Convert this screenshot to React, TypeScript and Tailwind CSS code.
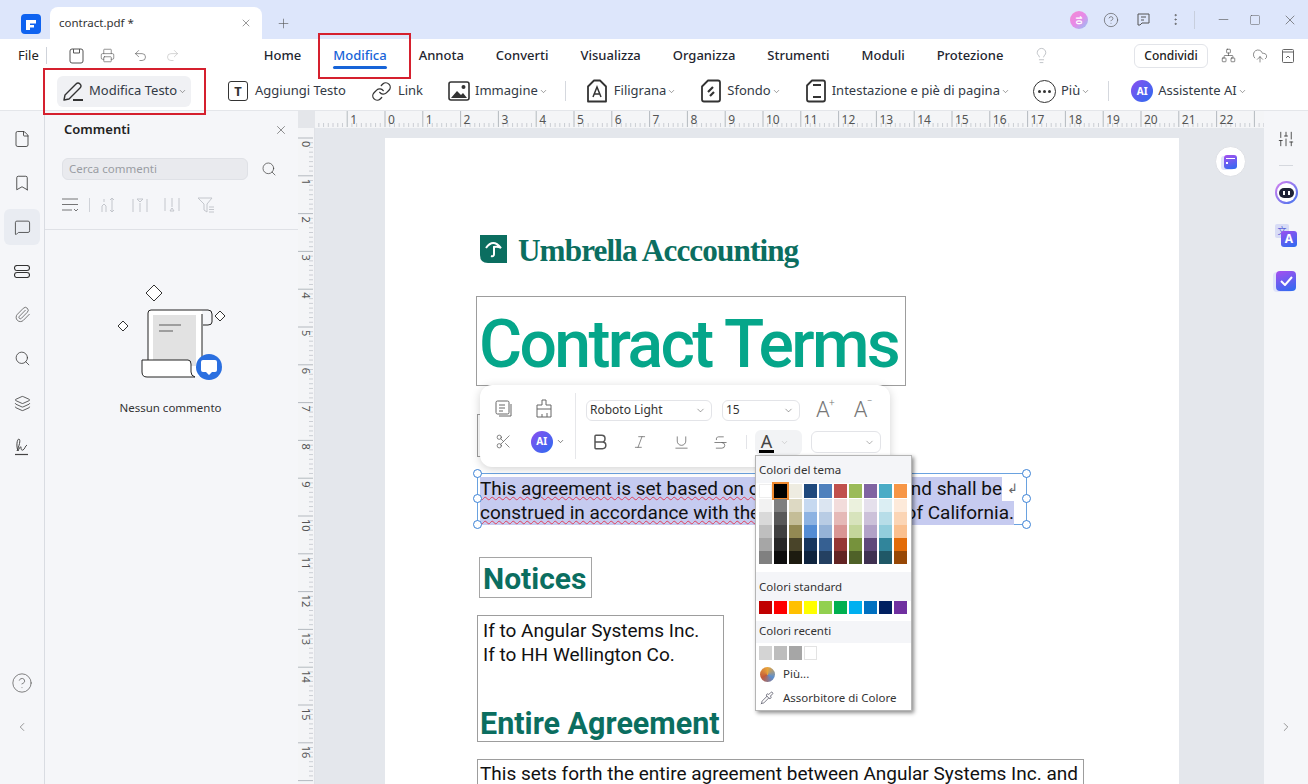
import React from "react";
import {
  X, Plus, Minus, Square, HelpCircle, MoreVertical, ChevronDown, ChevronLeft, ChevronRight, Search,
  Printer, Undo2, Redo2, Lightbulb, Network, CloudUpload, Bookmark, File as FileIcon, MessageSquare,
  Paperclip, Layers, SlidersVertical, Scissors, Bold, Italic, Underline, Strikethrough, Link as LinkIcon, Pipette,
} from "lucide-react";

const theme = [
  ["#ffffff", "#f2f2f2", "#d9d9d9", "#bfbfbf", "#a6a6a6", "#808080"],
  ["#000000", "#7f7f7f", "#595959", "#404040", "#262626", "#0d0d0d"],
  ["#eeece1", "#ddd9c3", "#c4bd97", "#938953", "#494429", "#1d1b10"],
  ["#1f497d", "#c6d9f0", "#8db3e2", "#548dd4", "#17365d", "#0f243e"],
  ["#4f81bd", "#dbe5f1", "#b8cce4", "#95b3d7", "#366092", "#244061"],
  ["#c0504d", "#f2dcdb", "#e5b9b7", "#d99694", "#953734", "#632423"],
  ["#9bbb59", "#ebf1dd", "#d7e3bc", "#c3d69b", "#76923c", "#4f6128"],
  ["#8064a2", "#e5e0ec", "#ccc1d9", "#b2a2c7", "#5f497a", "#3f3151"],
  ["#4bacc6", "#dbeef3", "#b7dde8", "#92cddc", "#31859b", "#205867"],
  ["#f79646", "#fdeada", "#fbd5b5", "#fac08f", "#e36c09", "#974806"],
];
const standard = ["#c00000", "#ff0000", "#ffc000", "#ffff00", "#92d050", "#00b050", "#00b0f0", "#0070c0", "#002060", "#7030a0"];

const UNIT = 37.8;

function HRuler() {
  const ticks: React.ReactNode[] = [];
  for (let i = -34; i < 200; i++) {
    const x = 70 + (i * UNIT) / 8;
    const major = i % 8 === 0;
    ticks.push(<line key={i} x1={x} x2={x} y1={major ? 0 : 12} y2={16} stroke={major ? "#9aa0a8" : "#b9bdc4"} strokeWidth="0.7" />);
  }
  const labels: React.ReactNode[] = [];
  for (let n = -1; n <= 22; n++) {
    labels.push(<text key={n} x={70 + n * UNIT + 3} y={13} fontSize="12" fill="#555" fontFamily="Noto Sans, sans-serif">{Math.abs(n)}</text>);
  }
  return (
    <svg width="950" height="16" className="block">
      {ticks}
      {labels}
    </svg>
  );
}

function VRuler() {
  const ticks: React.ReactNode[] = [];
  for (let i = 0; i < 140; i++) {
    const y = 10 + (i * UNIT) / 8;
    const major = i % 8 === 0;
    ticks.push(<line key={i} y1={y} y2={y} x1={major ? 0 : 11} x2={15} stroke={major ? "#9aa0a8" : "#b9bdc4"} strokeWidth="0.7" />);
  }
  const labels: React.ReactNode[] = [];
  for (let n = 0; n <= 16; n++) {
    const y = 10 + n * UNIT + 3;
    labels.push(<text key={n} x={4} y={y} fontSize="11" fill="#555" fontFamily="Noto Sans, sans-serif" transform={`rotate(90 4 ${y})`}>{n}</text>);
  }
  return (
    <svg width="15" height="660" className="block">
      {ticks}
      {labels}
    </svg>
  );
}

function Tool({ icon, label, chevron, className = "", gap = "ml-[6px]" }: { icon: React.ReactNode; label: string; chevron?: boolean; className?: string; gap?: string }) {
  return (
    <div className={`flex items-center shrink-0 ${className}`}>
      {icon}
      <span className={`${gap} text-[13px] text-[#333a45] whitespace-nowrap`}>{label}</span>
      {chevron && <ChevronDown size={9} strokeWidth={1.5} className="ml-[1px] mt-[1px] text-[#555]" />}
    </div>
  );
}

function Tab({ label, active }: { label: string; active?: boolean }) {
  return (
    <div className={`relative h-[29px] flex items-center text-[13px] font-medium whitespace-nowrap ${active ? "text-[#1764d8]" : "text-[#1f2630]"}`}>
      {label}
      {active && <div className="absolute left-0 right-0 bottom-[1px] h-[3px] rounded-full bg-[#1764d8]" />}
    </div>
  );
}

function Handle({ className }: { className: string }) {
  return <div className={`absolute w-[9px] h-[9px] rounded-full bg-white border border-[#3b82d6] ${className}`} />;
}

function NavIcon({ children, active }: { children: React.ReactNode; active?: boolean }) {
  return (
    <div className={`w-[36px] h-[36px] rounded-md flex items-center justify-center ${active ? "bg-[#e9ecf2]" : ""}`}>{children}</div>
  );
}

function Illustration() {
  return (
    <svg width="120" height="110" viewBox="0 0 120 110" fill="none" className="block">
      <path d="M40 3l8 8-8 8-8-8z M106 29l5 5-5 5-5-5z M9 39l5 5-5 5-5-5z" fill="#fff" stroke="#333" strokeWidth="1" />
      <rect x="34" y="28" width="54" height="66" fill="#fff" />
      <rect x="39" y="33" width="43" height="51" fill="#e2e2e2" />
      <path d="M34 78V31q0-3 3-3h57q4 0 4 4v8q0 3-4 3h-5 M88 32V88" stroke="#222" strokeWidth="1" />
      <path d="M45 43h22 M45 49h14" stroke="#888" strokeWidth="1.4" />
      <path d="M28 78h46q3 0 3 4v8q0 4 4 5H33q-5 0-5-5z" fill="#fff" stroke="#222" strokeWidth="1" />
      <circle cx="95" cy="85" r="13" fill="#2a6fe0" />
      <path d="M89 78h12q2 0 2 2v8q0 2-2 2h-3l-3 3-3-3h-3q-2 0-2-2v-8q0-2 2-2z" fill="#fff" />
    </svg>
  );
}

export default function App() {
  return (
    <div className="relative w-[1308px] h-[784px] overflow-hidden bg-white text-[#222] font-['Noto_Sans','Open_Sans',sans-serif]">
      {/* Title bar */}
      <div className="h-[39px] bg-[#dde6fb] flex items-end">
        <div className="w-[50px] h-[39px] flex items-start pl-[21px] pt-[14px]">
          <svg width="20" height="20" viewBox="0 0 20 20">
            <rect width="20" height="20" rx="4" fill="#0f63f0" />
            <path d="M5 6h10v3.500H9V11h4v2.500H9V16H5z" fill="#fff" />
          </svg>
        </div>
        <div className="w-[212px] h-[32px] bg-white rounded-t-lg flex items-center pl-[9px] pr-[10px] justify-between">
          <span className="text-[11.500px] text-[#333]">contract.pdf *</span>
          <X size={12} strokeWidth={1.2} className="text-[#555]" />
        </div>
        <div className="h-[32px] flex items-center ml-[14px]">
          <Plus size={15} strokeWidth={1} className="text-[#555]" />
        </div>
        <div className="flex-1" />
        <div className="h-[39px] flex items-center text-[#555] pr-[10px]">
          <div className="w-[18px] h-[18px] rounded-full bg-[linear-gradient(135deg,#f58ad0,#e78ae8_50%,#8ec6f5)] mr-[15px] flex items-center justify-center text-white text-[8px] font-bold leading-none">
            <span className="rotate-90">10</span>
          </div>
          <HelpCircle size={16} strokeWidth={1} className="mr-[17px]" />
          <svg width="15" height="15" viewBox="0 0 15 15" fill="none" stroke="#555" strokeWidth="1" className="mr-[17px]">
            <path d="M2 2h11v9H6l-2 2H2z M5 5h5 M5 8h3" />
          </svg>
          <MoreVertical size={15} strokeWidth={1.2} className="mr-[11px]" />
          <div className="w-px h-[18px] bg-[#c8cfdd] mr-[21px]" />
          <Minus size={15} strokeWidth={1} className="mr-[18px]" />
          <Square size={12} strokeWidth={1} className="mr-[21px]" />
          <X size={16} strokeWidth={1} />
        </div>
      </div>

      {/* Menu row */}
      <div className="h-[31px] pt-[2px] flex items-center">
        <span className="ml-[18px] text-[13px] text-[#222]">File</span>
        <div className="ml-[7px] w-px h-[17px] bg-[#cfd3da]" />
        <svg width="15" height="16" viewBox="0 0 15 16" fill="none" stroke="#555" strokeWidth="1" className="ml-[22px]">
          <path d="M3 1h9q2 0 2 2v10q0 2-2 2H3q-2 0-2-2V3q0-2 2-2z M4.500 1v4h6V1" />
        </svg>
        <Printer size={15} strokeWidth={1} className="ml-[16px] text-[#555]" />
        <Undo2 size={15} strokeWidth={1} className="ml-[18px] text-[#555]" />
        <Redo2 size={15} strokeWidth={1} className="ml-[17px] text-[#bbb]" />
        <div className="ml-[84px] flex items-center gap-[32px]">
          <Tab label="Home" />
          <Tab label="Modifica" active />
          <Tab label="Annota" />
          <Tab label="Converti" />
          <Tab label="Visualizza" />
          <Tab label="Organizza" />
          <Tab label="Strumenti" />
          <Tab label="Moduli" />
          <Tab label="Protezione" />
        </div>
        <Lightbulb size={17} strokeWidth={1} className="ml-[30px] text-[#a9adb3]" />
        <div className="flex-1" />
        <div className="w-[74px] h-[24px] mr-[13px] rounded-md border border-[#e2e4e9] flex items-center justify-center text-[12px] font-medium text-[#222]">Condividi</div>
        <Network size={15} strokeWidth={1} className="mr-[16px] text-[#444]" />
        <CloudUpload size={16} strokeWidth={1} className="mr-[14px] text-[#555]" />
        <svg width="12" height="14" viewBox="0 0 12 14" fill="none" stroke="#666" strokeWidth="1" className="mr-[14px]">
          <rect x="0.5" y="0.5" width="11" height="13" rx="1" />
          <path d="M0.5 3h11 M4 9l2-2 2 2" />
        </svg>
      </div>

      {/* Tool row */}
      <div className="h-[41px] pt-[2px] flex items-center border-b border-[#e4e6ea]">
        <div className="ml-[57px] w-[134px] h-[31px] rounded-md bg-[#f0f1f4] flex items-center pl-[5px] shrink-0">
          <Tool
            gap="ml-[5px]"
            icon={
              <svg width="22" height="21" viewBox="0 0 22 21" fill="none" stroke="#333" strokeWidth="1.4">
                <path d="M2 19l1-5L14 3q2-2 4 0t0 4L7 18z" strokeLinejoin="round" />
                <path d="M11 19h10" strokeWidth="2" />
              </svg>
            }
            label="Modifica Testo"
            chevron
          />
        </div>
        <Tool
          className="ml-[37px]"
          gap="ml-[7px]"
          icon={<div className="w-[20px] h-[20px] rounded-[3px] border-[1.5px] border-[#333] flex items-center justify-center text-[13px] font-bold leading-none text-[#333]">T</div>}
          label="Aggiungi Testo"
        />
        <Tool className="ml-[25px]" icon={<LinkIcon size={21} strokeWidth={1.5} className="text-[#333]" />} label="Link" />
        <Tool
          className="ml-[25px]"
          gap="ml-[5px]"
          icon={
            <svg width="22" height="20" viewBox="0 0 22 20" fill="none">
              <rect x="1" y="1" width="20" height="18" rx="2" stroke="#333" strokeWidth="1.6" />
              <path d="M3 17l6-7 4 4 2-2 4 5z" fill="#333" />
              <circle cx="15.500" cy="6" r="2" fill="#333" />
            </svg>
          }
          label="Immagine"
          chevron
        />
        <div className="ml-[17px] w-px h-[20px] bg-[#d5d8de]" />
        <Tool
          className="ml-[20px]"
          icon={
            <svg width="22" height="24" viewBox="0 0 22 24" fill="none" stroke="#333" strokeWidth="1.8">
              <path d="M8 1.500h6l6 6v15H2v-15z" strokeLinejoin="round" />
              <path d="M7 18l4-10 4 10 M8.500 15h5" strokeWidth="1.500" />
            </svg>
          }
          label="Filigrana"
          chevron
        />
        <Tool
          className="ml-[24px]"
          gap="ml-[5px]"
          icon={
            <svg width="22" height="24" viewBox="0 0 22 24" fill="none" stroke="#333" strokeWidth="1.8">
              <path d="M8 1.500h10q2 0 2 2v17q0 2-2 2H4q-2 0-2-2v-13z" strokeLinejoin="round" />
              <path d="M8 13l5-5 M10 17l4-4" strokeWidth="2.200" />
            </svg>
          }
          label="Sfondo"
          chevron
        />
        <Tool
          className="ml-[24px]"
          gap="ml-[5px]"
          icon={
            <svg width="22" height="24" viewBox="0 0 22 24" fill="none" stroke="#333" strokeWidth="1.8">
              <path d="M7 1.500h11q2 0 2 2v17q0 2-2 2H4q-2 0-2-2v-14z" strokeLinejoin="round" />
              <path d="M8 6h8 M8 18h8" strokeWidth="2.200" />
            </svg>
          }
          label="Intestazione e piè di pagina"
          chevron
        />
        <Tool
          className="ml-[23px]"
          gap="ml-[5px]"
          icon={
            <div className="w-[23px] h-[23px] rounded-full border-[1.5px] border-[#333] flex items-center justify-center gap-[2px]">
              <div className="w-[3px] h-[3px] rounded-full bg-[#333]" />
              <div className="w-[3px] h-[3px] rounded-full bg-[#333]" />
              <div className="w-[3px] h-[3px] rounded-full bg-[#333]" />
            </div>
          }
          label="Più"
          chevron
        />
        <div className="ml-[18px] w-px h-[20px] bg-[#d5d8de]" />
        <Tool
          className="ml-[22px]"
          gap="ml-[5px]"
          icon={<div className="w-[22px] h-[22px] rounded-full bg-[linear-gradient(135deg,#8a4ff0,#2b6cf0)] text-white text-[10px] font-bold flex items-center justify-center">AI</div>}
          label="Assistente AI"
          chevron
        />
      </div>

      {/* Body */}
      <div className="flex h-[673px]">
        {/* Left nav */}
        <div className="w-[45px] shrink-0 bg-[#f5f6f9] border-r border-[#d9dce2] flex flex-col items-center pt-[10px] text-[#333]">
          <NavIcon><FileIcon size={18} strokeWidth={1.1} /></NavIcon>
          <div className="mt-[8px]"><NavIcon><Bookmark size={18} strokeWidth={1.1} /></NavIcon></div>
          <div className="mt-[8px]"><NavIcon active><MessageSquare size={17} strokeWidth={1.1} /></NavIcon></div>
          <div className="mt-[8px]">
            <NavIcon>
              <svg width="16" height="13" viewBox="0 0 16 13" fill="none" stroke="#333" strokeWidth="1.1">
                <rect x="0.500" y="0.500" width="15" height="5" rx="2.500" />
                <rect x="0.500" y="7.500" width="15" height="5" rx="2.500" />
              </svg>
            </NavIcon>
          </div>
          <div className="mt-[7px]"><NavIcon><Paperclip size={17} strokeWidth={1.1} className="text-[#555]" /></NavIcon></div>
          <div className="mt-[8px]"><NavIcon><Search size={17} strokeWidth={1.1} /></NavIcon></div>
          <div className="mt-[9px]"><NavIcon><Layers size={17} strokeWidth={1.1} /></NavIcon></div>
          <div className="mt-[8px]">
            <NavIcon>
              <svg width="16" height="18" viewBox="0 0 16 18" fill="none" stroke="#444" strokeWidth="1">
                <path d="M3 13C5 8 7 2 5 1 3 1 2 8 4 13c1-3 3-5 3-4s0 4 2 3 2-4 4-5" />
                <path d="M1 16.500h13" strokeWidth="1.2" />
              </svg>
            </NavIcon>
          </div>
          <div className="flex-1" />
          <HelpCircle size={22} strokeWidth={0.8} className="text-[#555]" />
          <ChevronLeft size={14} strokeWidth={1.3} className="mt-[26px] mb-[50px] text-[#777]" />
        </div>

        {/* Comments panel */}
        <div className="w-[253px] shrink-0 bg-[#f5f6f9] flex flex-col">
          <div className="h-[38px] flex items-center pl-[19px] pr-[10px] justify-between">
            <span className="text-[13px] font-semibold text-[#222]">Commenti</span>
            <X size={14} strokeWidth={1} className="text-[#444]" />
          </div>
          <div className="mt-[9px] ml-[17px] flex items-center">
            <div className="w-[186px] h-[22px] rounded-md border border-[#dfe1e6] bg-[#e9eaee] flex items-center pl-[6px] text-[11.500px] text-[#9a9da3]">Cerca commenti</div>
            <Search size={16} strokeWidth={1.1} className="ml-[13px] text-[#444]" />
          </div>
          <div className="mt-[15px] ml-[17px] h-[20px] flex items-center text-[#c9ccd2]">
            <svg width="17" height="14" viewBox="0 0 17 14" fill="none" stroke="#666" strokeWidth="0.9">
              <path d="M0 1h16 M0 6.500h16 M0 12h10 M12 11l2 2 2-2" />
            </svg>
            <div className="ml-[10px] w-px h-[14px] bg-[#cfd2d8]" />
            <svg width="16" height="16" viewBox="0 0 16 16" fill="none" stroke="#c3c6cc" strokeWidth="1" className="ml-[10px]">
              <path d="M2 15V9l2-2 2 2v6 M4 2v3 M12 1v14 M10 3l2-2 2 2 M10 13l2 2 2-2" />
            </svg>
            <svg width="17" height="16" viewBox="0 0 17 16" fill="none" stroke="#c3c6cc" strokeWidth="1" className="ml-[16px]">
              <path d="M1 2v13 M15 2v13 M8 6v9 M5 2h6l-3 3z" />
            </svg>
            <svg width="17" height="16" viewBox="0 0 17 16" fill="none" stroke="#c3c6cc" strokeWidth="1" className="ml-[15px]">
              <path d="M1 1v13 M15 1v13 M8 1v9 M6 14h4l-2-3z" />
            </svg>
            <svg width="18" height="16" viewBox="0 0 18 16" fill="none" stroke="#c3c6cc" strokeWidth="1" className="ml-[16px]">
              <path d="M1 1h14l-5 6v8l-3-2V7z M12 10h5 M12 12.500h5 M12 15h5" />
            </svg>
          </div>
          <div className="mt-[14px] border-t border-[#dfe1e6] flex flex-col items-center">
            <div className="mt-[52px] ml-[4px]"><Illustration /></div>
            <span className="mt-[7px] -ml-[2px] text-[11.500px] text-[#333]">Nessun commento</span>
          </div>
        </div>

        {/* Work area */}
        <div className="flex-1 min-w-0 flex flex-col">
          <div className="flex h-[17px] shrink-0">
            <div className="w-[17px] bg-[#e4e6ea]" />
            <div className="flex-1 bg-[#f4f5f7] overflow-hidden"><HRuler /></div>
          </div>
          <div className="flex flex-1 min-h-0">
            <div className="w-[17px] shrink-0 bg-[#f4f5f7] border-r border-[#e0e2e7] overflow-hidden"><VRuler /></div>
            <div className="relative flex-1 min-w-0 bg-[#e4e7ec] overflow-hidden pl-[70px] pt-[10px]">
              {/* Page */}
              <div className="w-[794px] h-[700px] bg-white pl-[91px] font-['Roboto',sans-serif] text-black">
                <div className="pt-[97px] flex items-center pl-[4px] h-[125px]">
                  <svg width="27" height="28" viewBox="0 0 27 28" className="shrink-0">
                    <path d="M0 0h27v28H8q-8 0-8-8z" fill="#0b6e60" />
                    <path d="M6 13q7-10 15 0-3.500-2-7-1v7q0 3-3 2" fill="none" stroke="#fff" strokeWidth="2" />
                  </svg>
                  <span className="ml-[11px] mt-[3px] text-[31.200px] leading-none font-bold tracking-[-0.900px] text-[#0b6e60] font-['Liberation_Serif',serif] whitespace-nowrap">Umbrella Acccounting</span>
                </div>
                <div className="mt-[33px] w-[430px] h-[90px] border border-[#9d9d9d] pl-[2px] pt-[8px] flex items-center">
                  <span className="text-[66px] leading-none font-medium text-[#05a68a] whitespace-nowrap tracking-[-2.600px]">Contract Terms</span>
                </div>
                <div className="mt-[28px] ml-[1px] w-[300px] h-[43px] border border-[#9d9d9d]" />
                <div className="relative mt-[16px] ml-[1px] w-[550px] h-[52px] border border-[#6aa2e0] pl-[2px] pt-[3px] text-[19px] leading-[24px] text-[#111]">
                  <div className="flex justify-between pr-[24px] whitespace-nowrap">
                    <span className="bg-[#c6cbf0]"><span className="underline decoration-wavy decoration-[#e0405a] decoration-1">This agreement is set based on our mutual</span></span>
                    <span className="bg-[#c6cbf0]">nd shall be</span>
                  </div>
                  <div className="flex justify-between pr-[12px] whitespace-nowrap">
                    <span className="bg-[#c6cbf0]"><span className="underline decoration-wavy decoration-[#e0405a] decoration-1">construed in accordance with the law</span></span>
                    <span className="bg-[#c6cbf0]">of California.</span>
                  </div>
                  <span className="absolute right-[8px] top-[8px] text-[13px] text-[#666] leading-none">↲</span>
                  <Handle className="-left-[5px] -top-[5px]" />
                  <Handle className="-right-[5px] -top-[5px]" />
                  <Handle className="-left-[5px] top-[20px]" />
                  <Handle className="-right-[5px] top-[20px]" />
                  <Handle className="-left-[5px] -bottom-[5px]" />
                  <Handle className="-right-[5px] -bottom-[5px]" />
                </div>
                <div className="mt-[32px] ml-[3px] w-[113px] h-[41px] border border-[#a5a5a5] pl-[3px] pt-[3px] flex items-center">
                  <span className="text-[30px] leading-none font-bold text-[#0b6e60]">Notices</span>
                </div>
                <div className="mt-[17px] ml-[1px] w-[247px] h-[127px] border border-[#9d9d9d] flex flex-col text-[19px] leading-[24px] text-[#111] pl-[5px] pt-[3px]">
                  <span className="whitespace-nowrap">If to Angular Systems Inc.</span>
                  <span className="whitespace-nowrap">If to HH Wellington Co.</span>
                  <span className="mt-[39px] -ml-[3px] text-[30.500px] leading-[36px] font-bold text-[#0b6e60] whitespace-nowrap">Entire Agreement</span>
                </div>
                <div className="mt-[17px] ml-[1px] w-[607px] h-[40px] border border-[#9d9d9d] pl-[2px] pt-[3px] text-[19px] leading-[22px] text-[#111] whitespace-nowrap">
                  This sets forth the entire agreement between Angular Systems Inc. and
                </div>
              </div>
              {/* floating assistant button */}
              <div className="absolute left-[900px] top-[18px] w-[31px] h-[31px] rounded-full bg-white border border-[#dfe1e6] flex items-center justify-center">
                <div className="w-[13px] h-[14px] rounded-[3px] bg-[linear-gradient(160deg,#a74ff0,#2b6cf0)] flex flex-col items-start pl-[2px] pt-[3px] gap-[3px] shadow-[-3px_1px_0_#dfe3fa]">
                  <div className="w-[9px] h-px bg-white" />
                  <div className="w-[2px] h-[2px] bg-white" />
                </div>
              </div>
            </div>
          </div>
        </div>

        {/* Right rail */}
        <div className="w-[44px] shrink-0 bg-[#f5f6f9] flex flex-col items-center pt-[19px] text-[#333]">
          <SlidersVertical size={18} strokeWidth={1.1} />
          <div className="mt-[17px] w-[14px] h-px bg-[#d5d8de]" />
          <div className="mt-[15px] w-[23px] h-[23px] rounded-full bg-[linear-gradient(135deg,#d980f0,#3f74ee)] flex items-center justify-center">
            <div className="w-[19px] h-[19px] rounded-full bg-white flex items-center justify-center">
              <div className="w-[15px] h-[10px] rounded-full bg-[#1e2235] flex items-center justify-center gap-[3px]">
                <div className="w-[2px] h-[4px] bg-white" />
                <div className="w-[2px] h-[4px] bg-white" />
              </div>
            </div>
          </div>
          <div className="mt-[20px] w-[22px] h-[23px] relative">
            <div className="w-[14px] h-[14px] rounded-[2px] bg-[#d8dcf6] text-[#5a62d8] text-[9px] leading-[14px] text-center font-['Noto_Sans_CJK_SC',sans-serif]">文</div>
            <div className="absolute right-0 bottom-0 w-[16px] h-[16px] rounded-[3px] bg-[linear-gradient(160deg,#9a4ff0,#2b6cf0)] text-white text-[12px] font-bold leading-[16px] text-center">A</div>
          </div>
          <div className="mt-[24px] w-[20px] h-[20px] rounded-[4px] bg-[linear-gradient(160deg,#a74ff0,#2b6cf0)] flex items-center justify-center shadow-[-3px_1px_0_#dfe3fa]">
            <svg width="13" height="10" viewBox="0 0 13 10" fill="none" stroke="#fff" strokeWidth="2">
              <path d="M1 5l4 4 7-8" />
            </svg>
          </div>
          <div className="flex-1" />
          <ChevronRight size={14} strokeWidth={1.3} className="mb-[50px] text-[#777]" />
        </div>
      </div>

      {/* Floating text toolbar */}
      <div className="absolute left-[480px] top-[385px] w-[410px] h-[82px] bg-white rounded-xl shadow-[0_2px_10px_rgba(0,0,0,0.18)] flex text-[#555]">
        <div className="w-[96px] border-r border-[#e6e7ea] my-[8px] grid grid-cols-2 items-center justify-items-center pl-[3px] pr-[11px]">
          <svg width="17" height="17" viewBox="0 0 17 17" fill="none" stroke="#666" strokeWidth="1">
            <rect x="1" y="1" width="13" height="13" rx="1.500" />
            <path d="M4 5h6 M4 8h6 M4 11h4 M16 4v12H4" />
          </svg>
          <svg width="18" height="19" viewBox="0 0 18 19" fill="none" stroke="#666" strokeWidth="1">
            <path d="M7 1h4v5h5v12H2V6h5z M2 10h14 M7 18v-3 M12 18v-4" />
          </svg>
          <Scissors size={17} strokeWidth={1} />
          <div className="flex items-center ml-[8px]">
            <div className="w-[22px] h-[22px] rounded-full bg-[linear-gradient(135deg,#8a4ff0,#2b6cf0)] text-white text-[10px] font-bold flex items-center justify-center">AI</div>
            <ChevronDown size={9} strokeWidth={1.6} className="ml-[3px] text-[#333]" />
          </div>
        </div>
        <div className="flex-1 pl-[10px] pt-[14px]">
          <div className="flex items-center h-[22px]">
            <div className="w-[126px] h-[21px] rounded-md border border-[#e3e4e8] flex items-center justify-between pl-[3px] pr-[5px] text-[12px] text-[#333]">
              <span>Roboto Light</span>
              <ChevronDown size={11} strokeWidth={1} />
            </div>
            <div className="ml-[10px] w-[78px] h-[21px] rounded-md border border-[#e3e4e8] flex items-center justify-between pl-[3px] pr-[5px] text-[12px] text-[#333]">
              <span>15</span>
              <ChevronDown size={11} strokeWidth={1} />
            </div>
            <span className="ml-[16px] text-[22px] leading-none font-light text-[#777] relative font-['Roboto',sans-serif]">A<span className="absolute -right-[5px] -top-[1px] text-[10px]">+</span></span>
            <span className="ml-[24px] text-[22px] leading-none font-light text-[#777] relative font-['Roboto',sans-serif]">A<span className="absolute -right-[5px] -top-[3px] text-[10px]">−</span></span>
          </div>
          <div className="flex items-center mt-[8px] h-[26px]">
            <Bold size={20} strokeWidth={1.8} className="ml-[4px]" />
            <Italic size={16} strokeWidth={1} className="ml-[22px]" />
            <Underline size={17} strokeWidth={1} className="ml-[25px]" />
            <Strikethrough size={17} strokeWidth={1} className="ml-[22px]" />
            <div className="ml-[17px] w-px h-[14px] bg-[#e3e4e8]" />
            <div className="ml-[8px] w-[47px] h-[25px] rounded-md bg-[#f2f3f5] flex items-center pl-[4px] text-[#bbb]">
              <div className="flex flex-col items-center leading-none">
                <span className="text-[18px] leading-[18px] text-[#444]">A</span>
                <div className="w-[15px] h-[3px] bg-black" />
              </div>
              <ChevronDown size={9} strokeWidth={1.5} className="ml-[6px]" />
            </div>
            <div className="ml-[9px] w-[70px] h-[22px] rounded-md border border-[#e3e4e8] flex items-center justify-end pr-[5px]">
              <ChevronDown size={11} strokeWidth={1} />
            </div>
          </div>
        </div>
      </div>

      {/* Colour picker */}
      <div className="absolute left-[755px] top-[455px] w-[157px] h-[256px] bg-white border border-[#b5b5b5] shadow-[2px_2px_4px_rgba(0,0,0,0.45)] text-[11.500px] text-[#333] flex flex-col">
        <div className="bg-[#f4f5f8] pl-[3px] pt-[5px] h-[27px] leading-[18px]">Colori del tema</div>
        <div className="pl-[3px] pt-[1px] pb-[0px] bg-white">
          <div className="flex gap-[2px]">
            {theme.map((col, i) => (
              <div key={i} className="flex flex-col w-[13px]">
                {col.map((c, j) => (
                  <div key={j} style={{ backgroundColor: c }} className={`w-[13px] ${j === 0 ? "h-[14px] mb-[1px]" : "h-[13px]"} ${i === 0 && j === 0 ? "border border-[#eee]" : ""} ${i === 1 && j === 0 ? "outline outline-2 outline-[#f08a30]" : ""}`} />
                ))}
              </div>
            ))}
          </div>
        </div>
        <div className="mt-[8px] bg-[#f4f5f8] h-[29px] pl-[3px] pt-[6px] leading-[18px]">Colori standard</div>
        <div className="pl-[3px] flex gap-[2px] h-[19px]">
          {standard.map((c) => (
            <div key={c} style={{ backgroundColor: c }} className="w-[13px] h-[13px]" />
          ))}
        </div>
        <div className="bg-[#f4f5f8] h-[22px] pl-[3px] leading-[20px] mt-[1px]">Colori recenti</div>
        <div className="pl-[3px] pt-[3px] flex gap-[2px]">
          <div className="w-[13px] h-[14px] bg-[#d4d4d4]" />
          <div className="w-[13px] h-[14px] bg-[#bdbdbd]" />
          <div className="w-[13px] h-[14px] bg-[#a6a6a6]" />
          <div className="w-[13px] h-[14px] bg-white border border-[#e3e3e3]" />
        </div>
        <div className="flex items-center h-[22px] mt-[3px] pl-[4px]">
          <div className="w-[15px] h-[15px] rounded-full bg-[conic-gradient(#e8a43a,#5b8fd0,#c45a3a,#e8a43a)]" />
          <span className="ml-[8px]">Più...</span>
        </div>
        <div className="flex items-center h-[22px] mt-[2px] pl-[4px]">
          <Pipette size={14} strokeWidth={1.2} className="text-[#445]" />
          <span className="ml-[9px]">Assorbitore di Colore</span>
        </div>
      </div>

      {/* Red annotation boxes */}
      <div className="absolute left-[43px] top-[68px] w-[163px] h-[47px] border-2 border-[#d5202e]" />
      <div className="absolute left-[318px] top-[33px] w-[93px] h-[46px] border-2 border-[#d5202e]" />
    </div>
  );
}
